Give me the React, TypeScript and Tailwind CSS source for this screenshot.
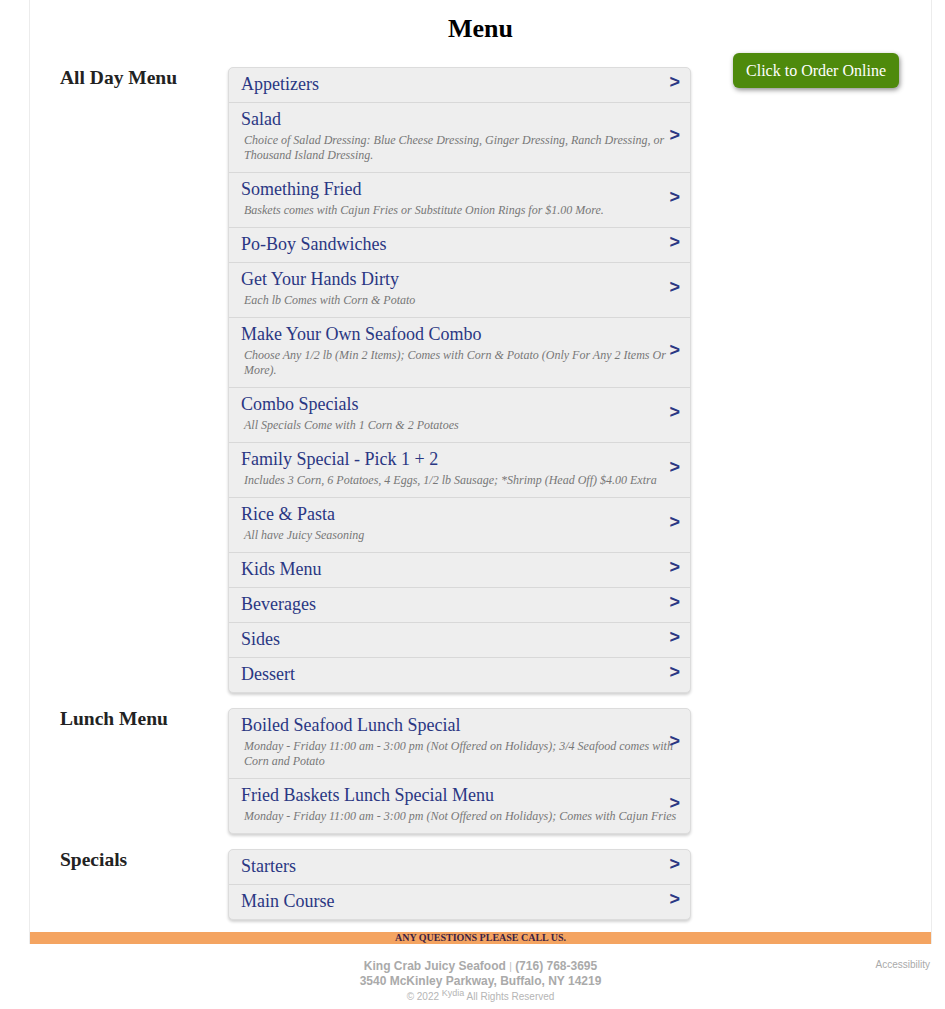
import React from "react";

type Item = { title: string; desc?: string };

const allDay: Item[] = [
  { title: "Appetizers" },
  {
    title: "Salad",
    desc: "Choice of Salad Dressing: Blue Cheese Dressing, Ginger Dressing, Ranch Dressing, or Thousand Island Dressing.",
  },
  {
    title: "Something Fried",
    desc: "Baskets comes with Cajun Fries or Substitute Onion Rings for $1.00 More.",
  },
  { title: "Po-Boy Sandwiches" },
  { title: "Get Your Hands Dirty", desc: "Each lb Comes with Corn & Potato" },
  {
    title: "Make Your Own Seafood Combo",
    desc: "Choose Any 1/2 lb (Min 2 Items); Comes with Corn & Potato (Only For Any 2 Items Or More).",
  },
  { title: "Combo Specials", desc: "All Specials Come with 1 Corn & 2 Potatoes" },
  {
    title: "Family Special - Pick 1 + 2",
    desc: "Includes 3 Corn, 6 Potatoes, 4 Eggs, 1/2 lb Sausage; *Shrimp (Head Off) $4.00 Extra",
  },
  { title: "Rice & Pasta", desc: "All have Juicy Seasoning" },
  { title: "Kids Menu" },
  { title: "Beverages" },
  { title: "Sides" },
  { title: "Dessert" },
];

const lunch: Item[] = [
  {
    title: "Boiled Seafood Lunch Special",
    desc: "Monday - Friday 11:00 am - 3:00 pm (Not Offered on Holidays); 3/4 Seafood comes with Corn and Potato",
  },
  {
    title: "Fried Baskets Lunch Special Menu",
    desc: "Monday - Friday 11:00 am - 3:00 pm (Not Offered on Holidays); Comes with Cajun Fries",
  },
];

const specials: Item[] = [{ title: "Starters" }, { title: "Main Course" }];

const Row = ({ item, first }: { item: Item; first: boolean }) => (
  <div
    className={`relative cursor-pointer pl-[12px] pr-[12px] pt-[5px] pb-[7px] ${
      first ? "" : "border-t border-[#d8d8d8]"
    }`}
  >
    <div className="text-[18px] leading-[22px] text-[#2a3783]">{item.title}</div>
    {item.desc && (
      <div className="ml-[3px] mt-[3px] mb-[2px] w-[433px] text-[12px] italic leading-[15px] text-[#777777]">
        {item.desc}
      </div>
    )}
    <span className="absolute right-[10px] top-[calc(50%-14px)] font-['Liberation_Sans',sans-serif] text-[18px] font-bold leading-[22px] text-[#2a3783]">
      &gt;
    </span>
  </div>
);

const Section = ({ label, items }: { label: string; items: Item[] }) => (
  <div className="flex">
    <h2 className="w-[168px] shrink-0 text-[19.5px] font-bold leading-[22px] text-[#222]">
      {label}
    </h2>
    <div className="w-[463px] overflow-hidden rounded-[5px] border border-[#dcdcdc] bg-[#eeeeee] shadow-[0_2px_3px_rgba(0,0,0,0.18)]">
      {items.map((item, i) => (
        <Row key={item.title} item={item} first={i === 0} />
      ))}
    </div>
  </div>
);

export default function App() {
  return (
    <div className="min-h-[1009px] bg-white font-['Liberation_Serif',serif]">
      <div className="ml-[29px] w-[903px] border-x border-[#ececec]">
        <h1 className="pt-[13px] text-center text-[26px] font-bold leading-[32px] text-black">
          Menu
        </h1>
        <div className="mt-[8px] flex">
          <div className="ml-[30px] mt-[14px] flex flex-col gap-[15px]">
            <Section label="All Day Menu" items={allDay} />
            <Section label="Lunch Menu" items={lunch} />
            <Section label="Specials" items={specials} />
          </div>
          <div className="ml-[42px]">
            <button className="h-[35px] w-[166px] rounded-[6px] bg-[#4e8a0c] text-[16px] text-white shadow-[1px_2px_5px_rgba(0,0,0,0.45)]">
              Click to Order Online
            </button>
          </div>
        </div>
        <div className="mt-[12px] bg-[#f4a461] text-center text-[10px] font-bold leading-[12px] text-[#3b2244]">
          ANY QUESTIONS PLEASE CALL US.
        </div>
      </div>
      <footer className="relative ml-[29px] w-[903px] pt-[15px] text-center font-['Liberation_Sans',sans-serif] text-[#aaaaaa]">
        <div className="text-[12px] font-bold leading-[14px]">
          King Crab Juicy Seafood <span className="text-[10px] font-normal text-[#bbb]">|</span>{" "}
          (716) 768-3695
        </div>
        <div className="text-[12px] font-bold leading-[14px]">
          3540 McKinley Parkway, Buffalo, NY 14219
        </div>
        <div className="mt-[2px] text-[10px] leading-[14px] text-[#b5b5b5]">
          © 2022 <sup className="text-[9px]">Kydia</sup> All Rights Reserved
        </div>
        <a className="absolute right-[2px] top-[13px] text-[10px] text-[#aaaaaa]">Accessibility</a>
      </footer>
    </div>
  );
}
